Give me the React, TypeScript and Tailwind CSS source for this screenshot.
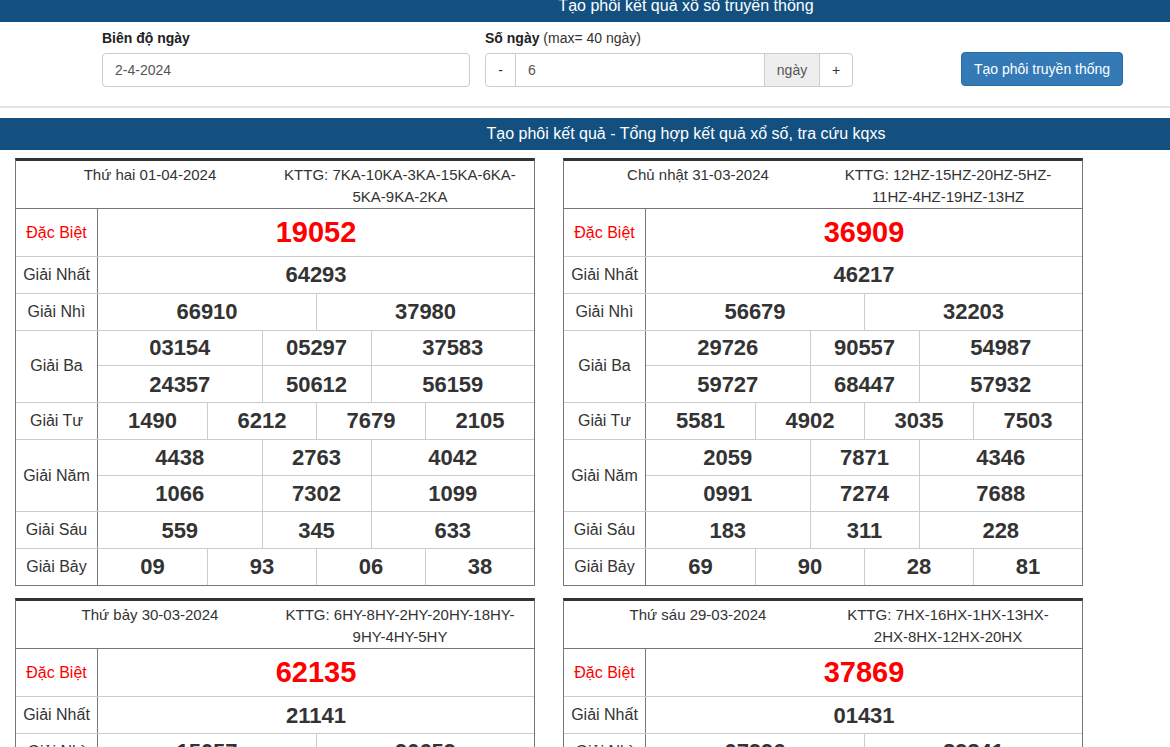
import React from 'react';

type Prize = { label: string; rows: string[][]; special?: boolean };
type Result = { date: string; kttg: [string, string]; prizes: Prize[] };

// spans per number cell on an 8-column grid, keyed by cells in the row
const spans: Record<number, string[]> = {
  1: ['col-span-8'],
  2: ['col-span-4', 'col-span-4'],
  3: ['col-span-3', 'col-span-2', 'col-span-3'],
  4: ['col-span-2', 'col-span-2', 'col-span-2', 'col-span-2'],
};

const results: Result[] = [
  {
    date: 'Thứ hai 01-04-2024',
    kttg: ['KTTG: 7KA-10KA-3KA-15KA-6KA-', '5KA-9KA-2KA'],
    prizes: [
      { label: 'Đặc Biệt', rows: [['19052']], special: true },
      { label: 'Giải Nhất', rows: [['64293']] },
      { label: 'Giải Nhì', rows: [['66910', '37980']] },
      { label: 'Giải Ba', rows: [['03154', '05297', '37583'], ['24357', '50612', '56159']] },
      { label: 'Giải Tư', rows: [['1490', '6212', '7679', '2105']] },
      { label: 'Giải Năm', rows: [['4438', '2763', '4042'], ['1066', '7302', '1099']] },
      { label: 'Giải Sáu', rows: [['559', '345', '633']] },
      { label: 'Giải Bảy', rows: [['09', '93', '06', '38']] },
    ],
  },
  {
    date: 'Chủ nhật 31-03-2024',
    kttg: ['KTTG: 12HZ-15HZ-20HZ-5HZ-', '11HZ-4HZ-19HZ-13HZ'],
    prizes: [
      { label: 'Đặc Biệt', rows: [['36909']], special: true },
      { label: 'Giải Nhất', rows: [['46217']] },
      { label: 'Giải Nhì', rows: [['56679', '32203']] },
      { label: 'Giải Ba', rows: [['29726', '90557', '54987'], ['59727', '68447', '57932']] },
      { label: 'Giải Tư', rows: [['5581', '4902', '3035', '7503']] },
      { label: 'Giải Năm', rows: [['2059', '7871', '4346'], ['0991', '7274', '7688']] },
      { label: 'Giải Sáu', rows: [['183', '311', '228']] },
      { label: 'Giải Bảy', rows: [['69', '90', '28', '81']] },
    ],
  },
  {
    date: 'Thứ bảy 30-03-2024',
    kttg: ['KTTG: 6HY-8HY-2HY-20HY-18HY-', '9HY-4HY-5HY'],
    prizes: [
      { label: 'Đặc Biệt', rows: [['62135']], special: true },
      { label: 'Giải Nhất', rows: [['21141']] },
      { label: 'Giải Nhì', rows: [['15057', '90659']] },
      { label: 'Giải Ba', rows: [['41872', '06315', '77204'], ['38916', '52480', '19763']] },
      { label: 'Giải Tư', rows: [['3842', '0917', '6625', '4180']] },
      { label: 'Giải Năm', rows: [['5236', '8104', '2971'], ['6658', '0392', '7415']] },
      { label: 'Giải Sáu', rows: [['427', '860', '153']] },
      { label: 'Giải Bảy', rows: [['15', '72', '44', '07']] },
    ],
  },
  {
    date: 'Thứ sáu 29-03-2024',
    kttg: ['KTTG: 7HX-16HX-1HX-13HX-', '2HX-8HX-12HX-20HX'],
    prizes: [
      { label: 'Đặc Biệt', rows: [['37869']], special: true },
      { label: 'Giải Nhất', rows: [['01431']] },
      { label: 'Giải Nhì', rows: [['07996', '29341']] },
      { label: 'Giải Ba', rows: [['85120', '36479', '10358'], ['62094', '47713', '93582']] },
      { label: 'Giải Tư', rows: [['2716', '9053', '4481', '6390']] },
      { label: 'Giải Năm', rows: [['1847', '5520', '3069'], ['7731', '2268', '9405']] },
      { label: 'Giải Sáu', rows: [['614', '295', '037']] },
      { label: 'Giải Bảy', rows: [['52', '18', '63', '90']] },
    ],
  },
];

function ResultTable({ data }: { data: Result }) {
  return (
    <div className="w-[520px] border border-[#777] border-t-[3px] border-t-[#333] bg-white">
      {/* Date + KTTG */}
      <div className="flex h-[48px] border-b border-[#777] text-[15px] leading-[22px] text-[#333]">
        <div className="w-[268px] pt-[3px] text-center">{data.date}</div>
        <div className="flex-1 pt-[3px] pr-[18px] text-center whitespace-nowrap">
          {data.kttg[0]}
          <br />
          {data.kttg[1]}
        </div>
      </div>

      {data.prizes.map((p, i) => (
        <div
          key={p.label}
          className={`flex ${i < data.prizes.length - 1 ? 'border-b border-[#ccc]' : ''}`}
        >
          <div
            className={`w-[82px] shrink-0 border-r border-[#777] flex items-center justify-center text-[16px] ${
              p.special ? 'text-[#f00]' : 'text-[#333]'
            }`}
          >
            {p.label}
          </div>
          <div className="flex-1">
            {p.rows.map((row, r) => (
              <div
                key={r}
                className={`grid grid-cols-8 ${p.special ? 'h-[47px]' : 'h-[35.75px]'} ${
                  r < p.rows.length - 1 ? 'border-b border-[#ccc]' : ''
                }`}
              >
                {row.map((n, j) => (
                  <div
                    key={j}
                    className={`${spans[row.length][j]} flex items-center justify-center font-bold ${
                      j > 0 ? 'border-l border-[#ccc]' : ''
                    } ${p.special ? 'text-[29px] text-[#f00]' : 'text-[22px] text-[#333]'}`}
                  >
                    {n}
                  </div>
                ))}
              </div>
            ))}
          </div>
        </div>
      ))}
    </div>
  );
}

export default function App() {
  return (
    <div className="w-full bg-white font-['Liberation_Sans',Arial,sans-serif] text-[#333]">
      {/* Top bar (scrolled, text partly cut) */}
      <div className="h-[22px] overflow-hidden bg-[#13507f] text-white text-[16px] leading-[22px] text-center pl-[202px]">
        <div className="-mt-[5px]">Tạo phôi kết quả xổ số truyền thống</div>
      </div>

      {/* Form */}
      <div className="flex pl-[102px] pt-[6px] pb-[19px] border-b-2 border-[#e4e4e4]">
        <div className="w-[368px]">
          <div className="text-[14px] leading-[20px] font-bold text-[#222] mb-[5px]">Biên độ ngày</div>
          <div className="h-[34px] border border-[#ccc] rounded-[4px] px-[12px] flex items-center text-[14px] text-[#555]">
            2-4-2024
          </div>
        </div>
        <div className="w-[368px] ml-[15px]">
          <div className="text-[14px] leading-[20px] mb-[5px] text-[#222]">
            <span className="font-bold">Số ngày</span> <span className="text-[#333]">(max= 40 ngày)</span>
          </div>
          <div className="flex h-[34px] text-[14px]">
            <div className="w-[31px] border border-[#ccc] rounded-l-[4px] flex items-center justify-center text-[#333]">-</div>
            <div className="flex-1 -ml-px border border-[#ccc] px-[12px] flex items-center text-[#555]">6</div>
            <div className="w-[56px] -ml-px border border-[#ccc] bg-[#eee] flex items-center justify-center text-[#555]">ngày</div>
            <div className="w-[34px] -ml-px border border-[#ccc] rounded-r-[4px] flex items-center justify-center text-[#333]">+</div>
          </div>
        </div>
        <div className="ml-[108px] pt-[24px]">
          <button className="w-[162px] h-[34px] rounded-[4px] bg-[#337ab7] border border-[#2e6da4] text-white text-[14px]">
            Tạo phôi truyền thống
          </button>
        </div>
      </div>

      {/* Second bar */}
      <div className="mt-[10px] h-[32px] bg-[#13507f] text-white text-[16px] leading-[32px] text-center pl-[202px]">
        Tạo phôi kết quả - Tổng hợp kết quả xổ số, tra cứu kqxs
      </div>

      {/* Result tables */}
      <div className="grid grid-cols-[520px_520px] gap-x-[28px] gap-y-[12.5px] pl-[15px] pt-[8px] pb-[20px] items-start">
        {results.map(r => (
          <ResultTable key={r.date} data={r} />
        ))}
      </div>
    </div>
  );
}
